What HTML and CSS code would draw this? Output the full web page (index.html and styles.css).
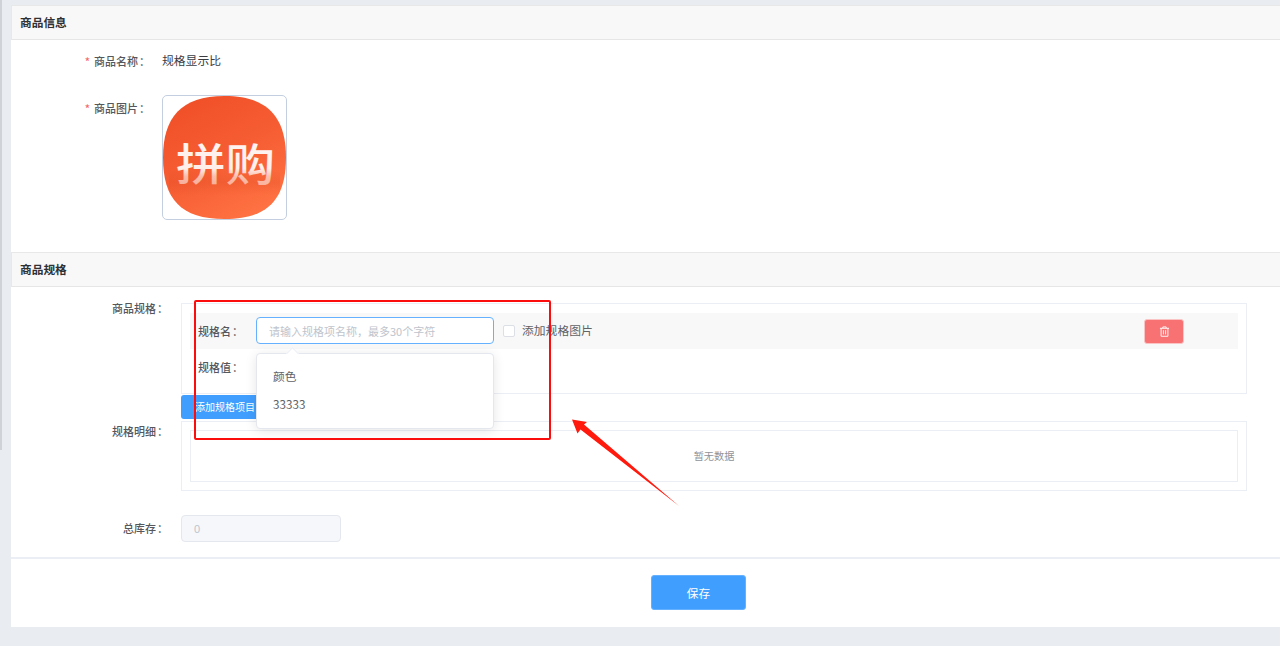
FILE: index.html
```html
<!DOCTYPE html>
<html lang="zh-CN">
<head>
<meta charset="utf-8">
<title>商品规格</title>
<link rel="stylesheet" href="styles.css">
</head>
<body>
<aside class="edge"></aside>
<main class="card">
  <section>
    <h2 class="section-title">商品信息</h2>
    <div class="info-body">
      <div class="info-row name-row">
        <label class="info-label"><span class="req">*</span>商品名称<span class="colon">：</span></label>
        <span class="value">规格显示比</span>
      </div>
      <div class="info-row">
        <label class="info-label img-label"><span class="req">*</span>商品图片<span class="colon">：</span></label>
        <div class="thumb">
          <svg class="logo" viewBox="0 0 124 124" width="123" height="123" xmlns="http://www.w3.org/2000/svg">
            <defs>
              <linearGradient id="bg" x1="0.2" y1="0" x2="0.75" y2="1">
                <stop offset="0" stop-color="#f04f27"/>
                <stop offset="0.5" stop-color="#f65d33"/>
                <stop offset="1" stop-color="#ff7343"/>
              </linearGradient>
              <linearGradient id="txt" x1="0" y1="0" x2="0" y2="1">
                <stop offset="0" stop-color="#fff" stop-opacity="0.95"/>
                <stop offset="0.6" stop-color="#fff" stop-opacity="0.9"/>
                <stop offset="0.72" stop-color="#fff" stop-opacity="0.6"/>
                <stop offset="1" stop-color="#fff" stop-opacity="0.4"/>
              </linearGradient>
              <linearGradient id="shade" x1="0" y1="0" x2="0" y2="1">
                <stop offset="0" stop-color="#d9431d" stop-opacity="0"/>
                <stop offset="0.5" stop-color="#d9431d" stop-opacity="0.22"/>
                <stop offset="1" stop-color="#d9431d" stop-opacity="0"/>
              </linearGradient>
            </defs>
            <path d="M62 0C106 0 124 22 124 62C124 104 106 124 62 124C18 124 0 104 0 62C0 22 18 0 62 0Z" fill="url(#bg)"/>
            <rect x="6" y="74" width="112" height="26" fill="url(#shade)"/>
            <text class="logo-text" transform="translate(63 86) scale(1 0.9)" text-anchor="middle" fill="url(#txt)">拼购</text>
          </svg>
        </div>
      </div>
    </div>
  </section>

  <section>
    <h2 class="section-title">商品规格</h2>
    <div class="spec-body">
      <div class="spec-row">
        <label class="spec-label">商品规格<span class="colon">：</span></label>
        <div class="spec-main">
          <div class="panel">
            <div class="spec-item">
              <span class="item-label">规格名<span class="colon">：</span></span>
              <div class="input-wrap">
                <input class="text-input" type="text" placeholder="请输入规格项名称，最多30个字符">
                <div class="popper">
                  <div class="popper-item">颜色</div>
                  <div class="popper-item">33333</div>
                </div>
              </div>
              <span class="check"></span>
              <span class="check-text">添加规格图片</span>
              <button class="del-btn" type="button" aria-label="删除">
                <svg viewBox="0 0 12 12" width="11" height="11" xmlns="http://www.w3.org/2000/svg" fill="none" stroke="#fff" stroke-width="1">
                  <path d="M1 2.5H11M4.2 2.5V1H7.8V2.5M2.3 2.5V11.2H9.7V2.5M4.8 4.5V9.2M7.2 4.5V9.2"/>
                </svg>
              </button>
            </div>
            <div class="value-row"><span class="item-label">规格值<span class="colon">：</span></span></div>
          </div>
          <button class="add-btn" type="button">添加规格项目</button>
        </div>
      </div>
      <div class="spec-row detail-row">
        <label class="spec-label">规格明细<span class="colon">：</span></label>
        <div class="panel detail-panel">
          <div class="empty">暂无数据</div>
        </div>
      </div>
      <div class="spec-row stock-row">
        <label class="spec-label stock-label">总库存<span class="colon">：</span></label>
        <input class="stock-input" type="text" value="0" disabled>
      </div>
    </div>
  </section>

  <footer class="actions">
    <button class="save-btn" type="button">保存</button>
  </footer>
</main>

<div class="mark-box"></div>
<svg class="mark-arrow" viewBox="0 0 120 100" width="120" height="100" xmlns="http://www.w3.org/2000/svg">
  <polygon points="12,9.5 27,12 24,14.5 119,96 20.5,19.5 17.5,23.5" fill="#ff1a0d"/>
</svg>
</body>
</html>
```

FILE: styles.css
```css
* { box-sizing: border-box; }

html, body { margin: 0; height: 646px; overflow: hidden; }

body {
  display: flex;
  align-items: flex-start;
  background: #e9edf1;
  font-family: "Noto Sans CJK SC", "Liberation Sans", sans-serif;
  font-size: 11px;
  color: #55575c;
  position: relative;
}

.edge {
  flex: 0 0 2px;
  height: 450px;
  background: #cfd2d6;
  margin-right: 9px;
}

.card {
  flex: 1;
  margin-top: 5px;
  background: #fff;
  min-width: 0;
}

.section-title {
  margin: 0;
  height: 35px;
  line-height: 31px;
  padding-left: 8px;
  font-size: 11.7px;
  font-weight: 700;
  color: #303133;
  background: #f8f8f8;
  border-top: 1px solid #e8e8e8;
  border-left: 1px solid #e8e8e8;
  border-bottom: 1px solid #e6e6e6;
}

.info-body { padding-top: 5px; height: 212px; }

.info-row { display: flex; align-items: flex-start; }

.name-row { align-items: center; height: 32px; margin-bottom: 18px; }

.colon { margin-left: 1px; margin-right: 3px; }

.info-label {
  width: 142px;
  margin-right: 9px;
  text-align: right;
  font-weight: 500;
  line-height: 16px;
}

.img-label { margin-top: 5px; }

.req { color: #f56c6c; margin-right: 4px; }

.value { font-size: 11.8px; line-height: 16px; margin-top: -2px; color: #3b3d42; }

.thumb {
  width: 125px;
  height: 125px;
  border: 1px solid #c3cfe0;
  border-radius: 5px;
  overflow: hidden;
}

.logo { display: block; }

.logo-text {
  font-size: 50px;
  font-weight: 500;
  font-family: "Noto Sans CJK SC", sans-serif;
}

.spec-body { padding-top: 16px; }

.spec-row { display: flex; align-items: flex-start; }

.spec-label {
  width: 160px;
  margin-right: 10px;
  text-align: right;
  font-weight: 500;
  line-height: 10px;
}

.spec-main { width: 1066px; }

.panel {
  width: 1066px;
  border: 1px solid #ebeef5;
  padding: 9px 8px 8px;
}

.spec-item {
  display: flex;
  align-items: center;
  height: 36px;
  background: #f8f8f8;
  padding: 0 0 1px 8px;
}

.item-label {
  flex: 0 0 58px;
  font-weight: 500;
}

.input-wrap { position: relative; flex: 0 0 238px; height: 27px; }

.text-input {
  display: block;
  width: 100%;
  height: 27px;
  padding: 0 12px;
  border: 1px solid #66b1ff;
  border-radius: 4px;
  outline: none;
  background: #fff;
  font: 11px "Noto Sans CJK SC", "Liberation Sans", sans-serif;
  color: #606266;
}

.text-input::placeholder { color: #c0c4cc; opacity: 1; }

.popper {
  position: absolute;
  top: 36px;
  left: 0;
  width: 238px;
  height: 76px;
  padding: 8px 0;
  background: #fff;
  border: 1px solid #e4e7ed;
  border-radius: 4px;
  box-shadow: 0 2px 12px rgba(0, 0, 0, 0.1);
  z-index: 5;
}

.popper::before {
  content: "";
  position: absolute;
  top: -5px;
  left: 31px;
  width: 8px;
  height: 8px;
  background: #fff;
  border-top: 1px solid #ebeef5;
  border-left: 1px solid #ebeef5;
  transform: rotate(45deg);
}

.popper-item {
  height: 28px;
  line-height: 28px;
  padding-left: 16px;
  font-size: 11.7px;
  color: #606266;
}

.check {
  flex: 0 0 12px;
  height: 12px;
  margin-left: 9px;
  background: #fff;
  border: 1px solid #dcdfe6;
  border-radius: 2px;
}

.check-text { margin-left: 7px; margin-bottom: 2px; font-size: 11.8px; color: #606266; }

.del-btn {
  display: flex;
  align-items: center;
  justify-content: center;
  width: 40px;
  height: 25px;
  margin-left: auto;
  margin-right: 54px;
  margin-top: 1px;
  padding: 0;
  background: #f87173;
  border: 1px solid #fbc4c4;
  border-radius: 3px;
}

.value-row {
  display: flex;
  align-items: center;
  height: 36px;
  padding-left: 8px;
}

.add-btn {
  display: block;
  height: 24px;
  width: 88px;
  margin-top: 1px;
  padding: 0 0 2px 14px;
  background: #409eff;
  border: 0;
  border-radius: 3px;
  color: #fff;
  font: 10px "Noto Sans CJK SC", sans-serif;
  text-align: left;
}

.detail-row { margin-top: 2px; }

.detail-row .spec-label { margin-top: 5px; }

.detail-panel { height: 70px; padding: 8px; }

.empty {
  height: 52px;
  line-height: 50px;
  border: 1px solid #ebeef5;
  text-align: center;
  font-size: 10.2px;
  color: #909399;
}

.stock-row { margin-top: 24px; align-items: center; }

.stock-label { margin-top: -2px; }

.stock-input {
  width: 160px;
  height: 27px;
  padding: 0 12px;
  background: #f5f7fa;
  border: 1px solid #e4e7ed;
  border-radius: 4px;
  font: 11px "Liberation Sans", sans-serif;
  color: #c0c4cc;
}

.actions {
  margin-top: 15px;
  height: 70px;
  padding: 16px 0 0 640px;
  border-top: 2px solid #ebeef5;
}

.save-btn {
  display: block;
  width: 95px;
  height: 35px;
  background: #409eff;
  border: 1px solid #66b1ff;
  border-radius: 3px;
  color: #fff;
  font: 11.7px "Noto Sans CJK SC", sans-serif;
}

.mark-box {
  position: absolute;
  left: 194px;
  top: 300px;
  width: 357px;
  height: 140px;
  border: 2px solid #fb0d0d;
  border-radius: 2px;
  z-index: 10;
}

.mark-arrow {
  position: absolute;
  left: 560px;
  top: 410px;
  z-index: 10;
}
```
